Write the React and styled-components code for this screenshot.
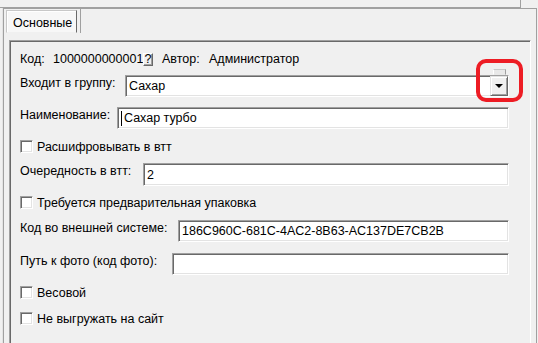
import React from 'react';
import styled, { createGlobalStyle } from 'styled-components';

const GlobalStyle = createGlobalStyle`
  * { box-sizing: border-box; }
  html, body { margin: 0; padding: 0; background: #f0f0f0; }
  body {
    font-family: "Liberation Sans", Arial, sans-serif;
    font-size: 12.5px;
    color: #000;
  }
`;

const Screen = styled.div`
  position: relative;
  width: 538px;
  height: 343px;
  overflow: hidden;
  background: #f0f0f0;
`;

const TopStrip = styled.div`
  width: 521px;
  height: 8px;
  border-right: 1px solid #a0a0a0;
  border-bottom: 1px solid #a0a0a0;
`;

const Frame = styled.div`
  margin-left: 3px;
  width: 534px;
  height: 340px;
  border: 1px solid #a0a0a0;
  border-bottom: none;
  box-shadow: -1px 0 #e3e3e3;
`;

const TabStrip = styled.div`
  display: flex;
  align-items: flex-start;
  height: 25px;
  padding-top: 1px;
`;

const Tab = styled.div`
  display: flex;
  align-items: center;
  margin-left: 2px;
  width: 71px;
  height: 23px;
  padding: 2px 0 0 6px;
  background: #f7f7f7;
  border: 1px solid;
  border-color: #c8c8c8 #696969 #f0f0f0 #c8c8c8;
  box-shadow: inset 1px 1px #fff;
`;

const TabSeparator = styled.div`
  margin-left: 3px;
  width: 1px;
  height: 24px;
  margin-top: -1px;
  background: #a0a0a0;
`;

const Panel = styled.div`
  margin: 6px 5px 0 5px;
  height: 320px;
  padding: 0 21px 0 10px;
  border: 1px solid;
  border-color: #a0a0a0 #fff #fff #a0a0a0;
  box-shadow: inset 1px 1px #696969;
`;

const Row = styled.div`
  display: flex;
  align-items: ${p => (p.$top ? 'flex-start' : 'center')};
  margin-top: ${p => p.$mt}px;
  height: ${p => p.$h}px;
`;

const Cell = styled.span`
  width: ${p => p.$w}px;
  flex: none;
  white-space: nowrap;
  line-height: 14px;
`;

const Label = styled.span`
  width: ${p => p.$w}px;
  flex: none;
  white-space: nowrap;
  line-height: 14px;
  padding-top: 1px;
`;

const HelpButton = styled.span`
  width: 10px;
  height: 13px;
  margin-right: 9px;
  flex: none;
  display: flex;
  align-items: center;
  justify-content: center;
  line-height: 12px;
  background: #f0f0f0;
  border: 1px solid;
  border-color: #fff #696969 #696969 #fff;
  box-shadow: inset -1px -1px #a0a0a0;
`;

const Input = styled.div`
  position: relative;
  flex: 1;
  display: flex;
  align-items: center;
  height: ${p => p.$h || 22}px;
  padding: 2px 2px 2px 3px;
  background: #fff;
  border: 1px solid;
  border-color: #a0a0a0 #fff #fff #a0a0a0;
  box-shadow: inset 1px 1px #696969, inset -1px -1px #e3e3e3;
  white-space: nowrap;
  overflow: visible;
`;

const Caret = styled.span`
  width: 1px;
  height: 15px;
  margin-right: 2px;
  background: #000;
`;

const Value = styled.span`
  flex: 1;
  line-height: 14px;
`;

const DropButton = styled.span`
  width: 18px;
  height: 20px;
  margin-right: -2px;
  display: flex;
  align-items: center;
  justify-content: center;
  background: #f0f0f0;
  border: 1px solid;
  border-color: #e3e3e3 #696969 #696969 #e3e3e3;
  box-shadow: inset 1px 1px #fff, inset -1px -1px #a0a0a0;
`;

const DropTab = styled.span`
  position: absolute;
  top: -7px;
  right: 2px;
  width: 13px;
  height: 6px;
  background: #e8e8e8;
  border: 1px solid;
  border-color: #c8c8c8 #a0a0a0 transparent #fff;
`;

const Arrow = styled.span`
  width: 0;
  height: 0;
  border-left: 4px solid transparent;
  border-right: 4px solid transparent;
  border-top: 4px solid #000;
`;

const Check = styled.span`
  width: 13px;
  height: 13px;
  flex: none;
  margin-right: 4px;
  background: #fff;
  border: 1px solid;
  border-color: #a0a0a0 #fff #fff #a0a0a0;
  box-shadow: inset 1px 1px #696969, inset -1px -1px #e3e3e3;
`;

const Highlight = styled.div`
  position: absolute;
  left: 476px;
  top: 59px;
  width: 47px;
  height: 43px;
  border: 4px solid #ed1c24;
  border-radius: 10px;
  pointer-events: none;
`;

function Field({ mt, h, label, w, value, caret }) {
  return (
    <Row $mt={mt} $h={h} $top>
      <Label $w={w}>{label}</Label>
      <Input $h={h}>
        {caret && <Caret />}
        <Value>{value}</Value>
      </Input>
    </Row>
  );
}

function CheckRow({ mt, label }) {
  return (
    <Row $mt={mt} $h={13}>
      <Check />
      <Cell>{label}</Cell>
    </Row>
  );
}

export default function App() {
  return (
    <Screen>
      <GlobalStyle />
      <TopStrip />
      <Frame>
        <TabStrip>
          <Tab>Основные</Tab>
          <TabSeparator />
        </TabStrip>
        <Panel>
          <Row $mt={11} $h={14}>
            <Cell $w={33}>Код:</Cell>
            <Cell $w={90}>1000000000001</Cell>
            <HelpButton>?</HelpButton>
            <Cell $w={47}>Автор:</Cell>
            <Cell>Администратор</Cell>
          </Row>
          <Row $mt={9} $h={22} $top>
            <Label $w={105}>Входит в группу:</Label>
            <Input $h={22}>
              <Value>Сахар</Value>
              <DropTab />
              <DropButton>
                <Arrow />
              </DropButton>
            </Input>
          </Row>
          <Field mt={10} h={22} w={97} label="Наименование:" value="Сахар турбо" caret />
          <CheckRow mt={11} label="Расшифровывать в втт" />
          <Field mt={10} h={23} w={123} label="Очередность в втт:" value="2" />
          <CheckRow mt={10} label="Требуется предварительная упаковка" />
          <Field mt={11} h={22} w={158} label="Код во внешней системе:" value="186C960C-681C-4AC2-8B63-AC137DE7CB2B" />
          <Field mt={11} h={22} w={152} label="Путь к фото (код фото):" value="" />
          <CheckRow mt={11} label="Весовой" />
          <CheckRow mt={13} label="Не выгружать на сайт" />
        </Panel>
      </Frame>
      <Highlight />
    </Screen>
  );
}
